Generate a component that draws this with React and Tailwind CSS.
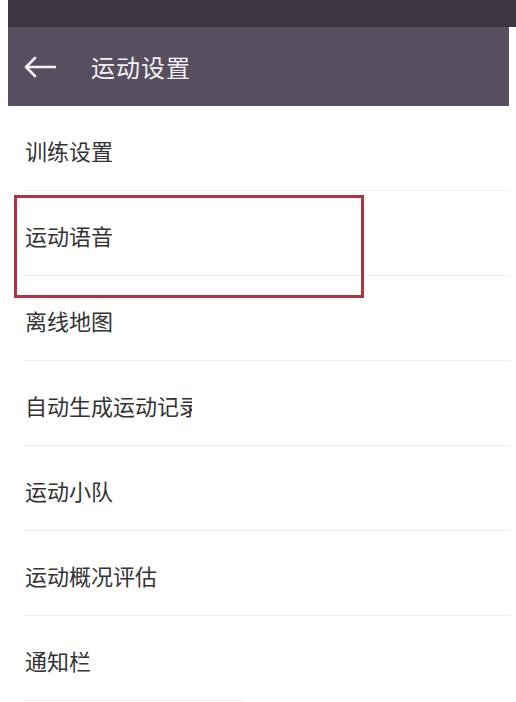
import React from 'react';

const items = ['训练设置', '运动语音', '离线地图', '自动生成运动记录', '运动小队', '运动概况评估', '通知栏'];

export default function App() {
    return (
        <div
            className="relative w-[516px] h-[702px] bg-white overflow-hidden"
            style={{ fontFamily: '"Noto Sans CJK SC", "Noto Sans", sans-serif' }}
        >
            {/* status bar + toolbar */}
            <div className="ml-2 h-[27px] bg-[#3d3641]" />
            <div className="ml-2 mr-[7px] h-[79px] bg-[#574f5f] flex items-center">
                <svg className="ml-[16px]" width="32" height="22" viewBox="0 0 32 22" fill="none">
                    <path d="M2 11 H31 M11 2 L2 11 L11 20" stroke="#f4f2f5" strokeWidth="2.6" strokeLinecap="round" strokeLinejoin="round" />
                </svg>
                <span className="ml-[35px] text-[24px] text-[#f1eff3] tracking-[1px] leading-none">运动设置</span>
            </div>

            {/* list */}
            <div className="pl-6 pr-[6px]">
                {items.map((t, i) => (
                    <div key={t}>
                        <div className="h-[84px] flex items-center pl-px pt-[4px] text-[22px] text-[#333333] whitespace-nowrap">
                            {t}
                        </div>
                        <div className={i === items.length - 1 ? 'w-[221px] h-px bg-[#eeeeee]' : 'h-px bg-[#eeeeee]'} />
                    </div>
                ))}
            </div>

            {/* annotation overlays */}
            <div className="absolute left-[14px] top-[195px] w-[350px] h-[103px] border-[3px] border-[#b2333f]" />
            <div className="absolute left-[192px] top-[361px] w-[195px] h-[82px] bg-white" />
        </div>
    );
}
